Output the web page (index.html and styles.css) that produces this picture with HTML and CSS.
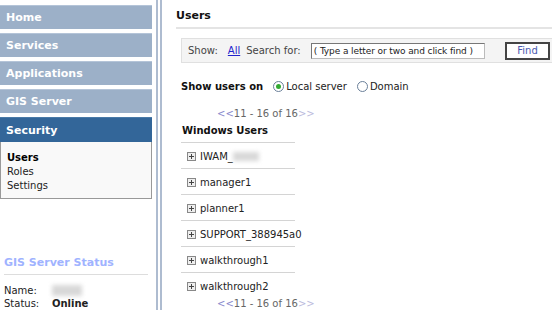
FILE: index.html
```html
<!DOCTYPE html>
<html lang="en">
<head>
    <meta charset="UTF-8">
    <title>Security - Users</title>
    <link rel="stylesheet" href="styles.css">
</head>
<body>
<div class="page">

    <!-- sol menu -->
    <aside class="sidebar">
        <nav class="menu">
            <a class="menu-item" href="#">Home</a>
            <a class="menu-item" href="#">Services</a>
            <a class="menu-item" href="#">Applications</a>
            <a class="menu-item" href="#">GIS Server</a>
            <a class="menu-item active" href="#">Security</a>
            <div class="submenu">
                <a class="current" href="#">Users</a>
                <a href="#">Roles</a>
                <a href="#">Settings</a>
            </div>
        </nav>

        <div class="status">
            <h3>GIS Server Status</h3>
            <div class="status-row"><span class="label">Name:</span><span class="blur"></span></div>
            <div class="status-row"><span class="label">Status:</span><b>Online</b></div>
        </div>
    </aside>

    <div class="divider"></div>

    <!-- icerik -->
    <main class="content">
        <h2 class="title">Users</h2>

        <div class="searchbar">
            <span>Show:</span>
            <a href="#" class="all">All</a>
            <span>Search for:</span>
            <input type="text" class="search-input" value="( Type a letter or two and click find )">
            <button class="find">Find</button>
        </div>

        <div class="show-on">
            <b>Show users on</b>
            <label><span class="radio checked"></span>Local server</label>
            <label><span class="radio"></span>Domain</label>
        </div>

        <div class="pager"><span class="prev">&lt;&lt;</span>11 - 16 of 16<span class="next">&gt;&gt;</span></div>

        <h4 class="list-title">Windows Users</h4>
        <ul class="users">
            <li><span class="plus"></span>IWAM_<span class="blur small"></span></li>
            <li><span class="plus"></span>manager1</li>
            <li><span class="plus"></span>planner1</li>
            <li><span class="plus"></span>SUPPORT_388945a0</li>
            <li><span class="plus"></span>walkthrough1</li>
            <li><span class="plus"></span>walkthrough2</li>
        </ul>

        <div class="pager bottom"><span class="prev">&lt;&lt;</span>11 - 16 of 16<span class="next">&gt;&gt;</span></div>
    </main>
</div>
</body>
</html>
```

FILE: styles.css
```css
body, html {
    margin: 0;
    padding: 0;
    height: 100%;
    background: #fff;
    overflow: hidden;
    font-family: "DejaVu Sans", Verdana, sans-serif;
    font-size: 10px;
    color: #222;
}

a {
    text-decoration: none;
    color: inherit;
}

.page {
    display: flex;
    height: 310px;
}

/* Sol menu */
.sidebar {
    width: 152px;
    display: flex;
    flex-direction: column;
}

.menu {
    display: flex;
    flex-direction: column;
    gap: 4px;
    padding-top: 5px;
}

.menu-item {
    height: 24px;
    line-height: 24px;
    padding-left: 6px;
    background: #9cb0c8;
    border-top: 1px solid #b4c4d8;
    box-sizing: border-box;
    color: #fff;
    font-weight: bold;
    font-size: 11px;
}

.menu-item.active {
    background: #336699;
    border-top-color: #4a7aa8;
    height: 25px;
    line-height: 25px;
}

.submenu {
    margin-top: -4px;
    height: 57px;
    box-sizing: border-box;
    background: #f9f9f9;
    border: 1px solid #999;
    border-top: none;
    padding: 9px 6px 0;
    display: flex;
    flex-direction: column;
    line-height: 14px;
}

.submenu .current {
    font-weight: bold;
    color: #000;
}

.status {
    margin-top: 57px;
    padding-left: 4px;
}

.status h3 {
    margin: 0 4px 0 0;
    padding-bottom: 5px;
    font-size: 11px;
    color: #9fb3ff;
    border-bottom: 1px solid #ddd;
}

.status-row {
    display: flex;
    align-items: center;
    height: 13px;
}

.status-row:first-of-type {
    margin-top: 9px;
}

.status .label {
    width: 48px;
}

.blur {
    display: inline-block;
    width: 30px;
    height: 11px;
    background: #d8d8d8;
    filter: blur(2px);
}

.blur.small {
    width: 26px;
    height: 9px;
}

/* Ayirici cizgi */
.divider {
    width: 2px;
    margin-left: 4px;
    border-left: 2px solid #aebcd0;
    border-right: 2px solid #aebcd0;
}

/* Icerik */
.content {
    flex: 1;
    padding-left: 14px;
}

.title {
    margin: 9px 0 0;
    padding-bottom: 5px;
    font-size: 11px;
    color: #111;
    border-bottom: 2px solid #e4e4e4;
}

.searchbar {
    margin: 9px 0 0 5px;
    height: 25px;
    box-sizing: border-box;
    background: #f4f4f4;
    border: 1px solid #e0e0e0;
    border-right: none;
    display: flex;
    align-items: center;
    padding-left: 6px;
    color: #444;
}

.all {
    color: #2222cc;
    text-decoration: underline;
    margin: 0 6px 0 10px;
}

.search-input {
    margin-left: 10px;
    width: 174px;
    height: 16px;
    box-sizing: border-box;
    border: 1px solid #777;
    border-right-color: #bbb;
    border-bottom-color: #bbb;
    font: 9px "DejaVu Sans", sans-serif;
    letter-spacing: -0.1px;
    color: #222;
    padding: 0 2px;
}

.find {
    margin-left: auto;
    margin-right: 2px;
    width: 45px;
    height: 18px;
    background: #fff;
    border: 2px solid #444;
    font: 10px "DejaVu Sans", sans-serif;
    color: #4a5ab0;
    padding: 0;
}

.show-on {
    margin: 18px 0 0 5px;
    display: flex;
    align-items: center;
    gap: 10px;
}

.show-on b {
    font-size: 10px;
    color: #111;
}

.show-on label {
    display: flex;
    align-items: center;
    gap: 2px;
}

.radio {
    display: inline-block;
    width: 9px;
    height: 9px;
    border-radius: 50%;
    border: 1px solid #6a7f99;
    background: #fff;
    position: relative;
}

.radio.checked::after {
    content: "";
    position: absolute;
    left: 2px;
    top: 2px;
    width: 5px;
    height: 5px;
    border-radius: 50%;
    background: #33aa33;
}

.pager {
    margin: 16px 0 0 41px;
    color: #666;
}

.pager .prev {
    color: #8888cc;
}

.pager .next {
    color: #bbbbdd;
}

.pager.bottom {
    margin-top: 0;
}

.list-title {
    margin: 6px 0 0 6px;
    font-size: 10px;
    color: #111;
}

.users {
    list-style: none;
    margin: 6px 0 0 5px;
    padding: 0;
    width: 114px;
}

.users li {
    height: 26px;
    border-top: 1px solid #d4d4d4;
    box-sizing: border-box;
    padding: 2px 0 0 6px;
    display: flex;
    align-items: center;
}

.plus {
    flex-shrink: 0;
    display: inline-block;
    width: 7px;
    height: 7px;
    border: 1px solid #888;
    margin-right: 4px;
    background:
        linear-gradient(#444, #444) center / 5px 1px no-repeat,
        linear-gradient(#444, #444) center / 1px 5px no-repeat,
        #eee;
}
```
